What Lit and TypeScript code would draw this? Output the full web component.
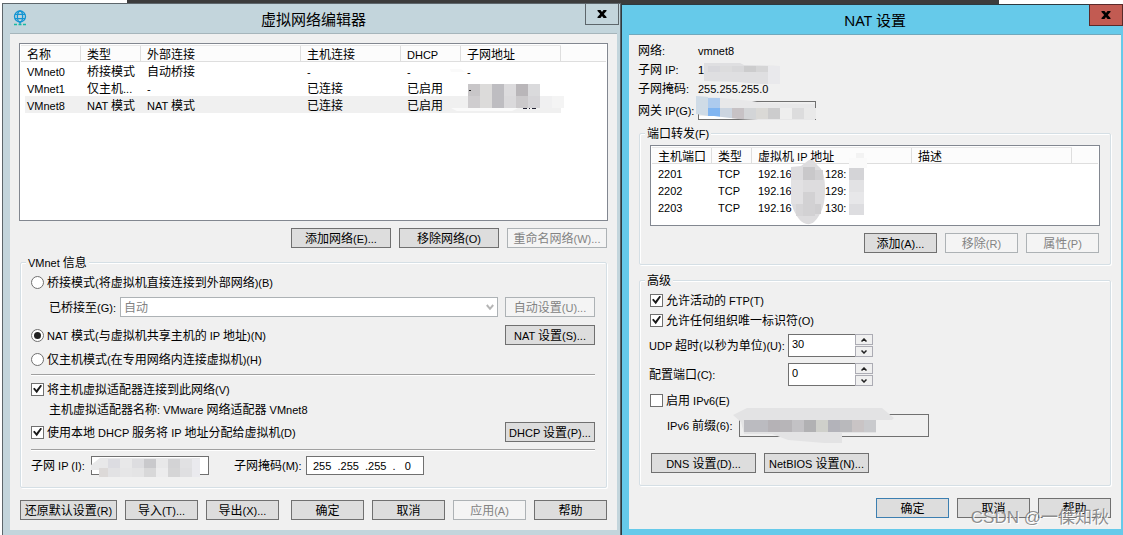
import { LitElement, html, svg, css, nothing } from "lit";
import { customElement, property } from "lit/decorators.js";
import { classMap } from "lit/directives/class-map.js";

type Cell = [number, number, number, number, string];

/** Splits a caption so that Latin runs use the smaller UI face beside the Chinese one. */
const t = (text: string) => {
  const runs = text.match(/[\u3000-\u9fff]+|[^\u3000-\u9fff]+/g) ?? [];
  return html`<span class="t">${runs.map((r) => (/[\u3000-\u9fff]/.test(r) ? r : html`<span class="l">${r}</span>`))}</span>`;
};

const cells = (list: Cell[]) =>
  list.map(([x, y, w, h, c]) => svg`<rect x=${x} y=${y} width=${w} height=${h} fill=${c}></rect>`);

const strip = (x: number, y: number, w: number, h: number, colors: string[]): Cell[] =>
  colors.map((c, i) => [x + i * w, y, w, h, c]);

@customElement("dialog-window")
class DialogWindow extends LitElement {
  @property() heading = "";
  @property() tone: "idle" | "active" = "idle";

  static styles = css`
    :host { display: block; min-width: 0; }
    .frame {
      box-sizing: border-box; height: 100%; position: relative;
      border: 1px solid #5d666b; border-bottom: 0; background: #c3d5dc; padding: 0 3px 4px 7px;
    }
    .frame.active { background: #66caea; border-color: #2d3a40; border-right: 0; padding: 0 2px 6px 7px; }
    .bar {
      height: 29px; display: flex; align-items: center; justify-content: center;
      border-bottom: 1px solid #a6b5bb; font: 15px/20px "Noto Sans", "Noto Sans CJK SC", sans-serif; color: #000;
    }
    .active .bar { border-color: #71a9bd; }
    .bar h1 { font: inherit; margin: 0; }
    .icon { position: absolute; left: 10px; top: 6px; }
    .close {
      position: absolute; right: 1px; top: -1px; width: 34px; height: 22px; padding: 0;
      border: 1px solid #5d666b; background: transparent; display: grid; place-items: center;
    }
    .active .close { right: 0; background: #c25b52; border-color: #5a2a2a; }
    .client { position: relative; background: #f0f0f0; }
  `;

  render() {
    const active = this.tone === "active";
    return html`
      <section class=${classMap({ frame: true, active })}>
        <header class="bar">
          ${active ? nothing : html`
            <svg class="icon" width="14" height="16" viewBox="0 0 14 16" fill="none" stroke="#1395d3" stroke-width="1.3" aria-hidden="true">
              <circle cx="7" cy="6.5" r="5.5"></circle>
              <ellipse cx="7" cy="6.5" rx="2.6" ry="5.5"></ellipse>
              <path d="M2 4.3h10M2 8.7h10M7 12v2"></path>
              <path d="M1 14.5h3M5.5 14.5h3M10 14.5h3" stroke="#18b9a4"></path>
            </svg>`}
          <h1>${this.heading}</h1>
          <button class="close" aria-label="关闭">
            <svg width="10" height="8" viewBox="0 0 10 8" aria-hidden="true">
              <path d="M.5 0h3L5 2l1.500-2h3v1L6.800 4l2.700 3v1h-3L5 6 3.500 8h-3V7l2.700-3L.5 1z" fill="#000"></path>
            </svg>
          </button>
        </header>
        <div class="client"><slot></slot></div>
      </section>`;
  }
}

@customElement("app-root")
class AppRoot extends LitElement {
  static styles = css`
    :host {
      display: block; position: relative; min-height: 100vh; box-sizing: border-box; padding: 3px 0 0 2px;
      background: linear-gradient(90deg, #fff 11.3%, #3c3c3c 11.3%, #3c3c3c 89%, #fff 89%) 0 0 / 100% 4px no-repeat #fff;
      color: #000; font: 12px/16px "Noto Sans CJK SC", sans-serif;
    }
    .desk { display: grid; grid-template-columns: 619fr 502fr; min-height: calc(100vh - 3px); }
    .right { margin-top: 1px; }
    .t { white-space: pre; }
    .l { font: 11px/16px "Liberation Sans", sans-serif; }

    .left-body { padding: 9px 9px 10px; }
    .right-body { padding: 6px 10px 11px; }

    .list { border: 1px solid #828790; background: #fff; padding: 1px; overflow: hidden; box-sizing: border-box; }
    .networks { min-height: 178px; }
    .ports { min-height: 81px; margin-top: 4px; }
    table { width: 100%; border-collapse: separate; border-spacing: 0; table-layout: fixed; }
    th, td { box-sizing: border-box; height: 17px; padding: 0 0 0 6px; text-align: left; font-weight: 400; white-space: nowrap; overflow: hidden; line-height: 14px; }
    th { background: #fcfcfc; border-bottom: 1px solid #dedede; border-top: 1px solid #e8e8e8; box-shadow: inset -1px 0 #dedede; }
    th:last-child { box-shadow: none; border-top-color: #fcfcfc; }
    th .l, td .l { line-height: 12px; }
    .chosen td:not(:last-child) { background: #f0f0f0; }
    .chosen td:first-child { background: linear-gradient(90deg, #fff 4px, #f0f0f0 4px); }
    .w40 { width: 40px; } .w60 { width: 60px; } .w100 { width: 100px; } .w160 { width: 160px; }
    .addr { display: grid; grid-template-columns: 67px auto; justify-content: start; }

    .btn {
      box-sizing: border-box; height: 20px; min-width: 73px; padding: 0; border: 1px solid #707070; background: #ddd;
      color: #000; font: inherit; display: inline-flex; align-items: center; justify-content: center; white-space: nowrap;
    }
    .btn:disabled { background: #f4f4f4; border-color: #adb2b5; color: #838383; }
    .btn.default { border-color: #3c7fb1; }
    .b90 { width: 90px; } .b97 { width: 97px; } .b100 { width: 100px; } .b105 { width: 105px; }
    .actions { display: flex; justify-content: flex-end; gap: 8px; margin: 7px 1px 0 0; }
    .footer { display: flex; gap: 8px; margin: 12px 1px 0; }
    .footer .push { margin-left: auto; }
    .right-body .footer { margin-right: 0; }

    fieldset { margin: 6px 1px 0; padding: 0; min-width: 0; border: 1px solid #d5dfe5; border-radius: 2px; box-shadow: inset 1px 1px #fff, 1px 1px #fff; }
    legend { margin-left: 5px; padding: 0 2px; height: 16px; background: #f0f0f0; }
    .group { padding: 0 11px 12px 10px; }
    .right-body fieldset { margin: 5px 0 0; }
    .right-body fieldset + fieldset { margin-top: 7px; }
    .right-body .group { padding: 0 10px 11px; }
    .right-body .advanced { padding-bottom: 12px; }

    .row { display: flex; align-items: center; min-height: 20px; }
    .row.end { justify-content: space-between; }
    .m2 { margin-top: 2px; } .m3 { margin-top: 3px; } .m4 { margin-top: 4px; } .m5 { margin-top: 5px; }
    .m6 { margin-top: 6px; } .m8 { margin-top: 8px; } .m16 { margin-top: 16px; }
    .indent { padding-left: 18px; }
    .choice { display: inline-flex; align-items: center; gap: 3px; }
    .choice input { appearance: none; margin: 0; width: 13px; height: 13px; box-sizing: border-box; border: 1px solid #707070; background: #fff; position: relative; flex: none; }
    .choice input[type="radio"] { border-radius: 50%; }
    .choice input[type="radio"]:checked::after { content: ""; position: absolute; inset: 2px; border-radius: 50%; background: #222; }
    .choice input[type="checkbox"]:checked::after {
      content: ""; position: absolute; inset: 1px; background: #1a1a1a;
      clip-path: polygon(0 48%, 18% 36%, 38% 62%, 84% 2%, 100% 14%, 42% 98%);
    }
    .rule { border: 0; height: 1px; background: #a0a0a0; margin: 5px 0 0; box-shadow: 0 1px #fff; }
    .rule.far { margin-top: 7px; }

    .combo { position: relative; flex: 1; margin: 0 7px 0 4px; display: flex; }
    .combo select { appearance: none; flex: 1; height: 20px; padding: 0 3px; border: 1px solid #adb2b5; border-radius: 0; background: #fff; color: #838383; font: inherit; opacity: 1; box-sizing: border-box; }
    .combo svg { position: absolute; right: 4px; top: 7px; }

    .text { box-sizing: border-box; height: 19px; width: 118px; border: 1px solid #707070; border-radius: 0; background: #fff; padding: 0 6px; margin: 0; font: 11px/16px "Liberation Sans", sans-serif; color: #000; }
    .ip-row { min-height: 19px; }
    .ip-row label { width: 60px; }
    .ip-row .mask { width: 72px; margin-left: 25px; }
    .facts { margin: 0; padding-left: 9px; margin-left: -10px; display: grid; grid-template-columns: 60px auto; grid-auto-rows: 19px; align-items: center; }
    .facts dt, .facts dd { margin: 0; }
    .gateway { min-height: 19px; margin: 3px 0 0 -1px; }
    .gateway label { width: 60px; }
    .gateway .text { background: #f0f0f0; }

    .numeric { min-height: 23px; }
    .numeric label { width: 139px; margin-left: -1px; white-space: nowrap; }
    .spin { display: flex; width: 85px; height: 23px; }
    .spin input { flex: 1; min-width: 0; box-sizing: border-box; border: 1px solid #707070; border-right: 0; border-radius: 0; padding: 0 3px 3px; background: #fff; font: 11px/16px "Liberation Sans", sans-serif; }
    .steps { display: grid; grid-template-rows: 1fr 1fr; width: 18px; background: #f0f0f0; gap: 1px; }
    .steps button { border: 1px solid #acacb4; background: #f0f0f0; padding: 0; display: grid; place-items: center; min-height: 0; }
    .prefix { min-height: 23px; padding-left: 17px; }
    .prefix label { width: 72px; }
    .prefix .text { width: 190px; height: 23px; background: #f0f0f0; }
    .pair { display: flex; gap: 8px; padding-left: 1px; }

    .redact { position: absolute; left: 0; top: 0; pointer-events: none; }
    .mark { position: absolute; right: 14px; bottom: 5px; font-family: "Liberation Sans", "Noto Sans CJK SC", sans-serif; font-size: 17px; line-height: 24px; color: rgba(115, 115, 115, 0.8); text-shadow: 1px 1px #fff; pointer-events: none; white-space: nowrap; }
  `;

  private btn(text: string, cls = "", disabled = false) {
    return html`<button class="btn ${cls}" ?disabled=${disabled}>${t(text)}</button>`;
  }

  private choice(kind: "radio" | "checkbox", text: string, checked = false) {
    return html`<label class="choice"><input type=${kind} name=${kind === "radio" ? "mode" : text} ?checked=${checked} />${t(text)}</label>`;
  }

  private spin(id: string, label: string, value: string, gap: string) {
    return html`
      <div class="row numeric ${gap}">
        <label for=${id}>${t(label)}</label>
        <div class="spin">
          <input id=${id} inputmode="numeric" .value=${value} />
          <div class="steps">
            <button aria-label="增加"><svg width="6" height="4" viewBox="0 0 6 4"><path d="M.5 3.500 3 1l2.500 2.500" fill="none" stroke="#222" stroke-width="1.500"></path></svg></button>
            <button aria-label="减少"><svg width="6" height="4" viewBox="0 0 6 4"><path d="M.5.5 3 3 5.500.5" fill="none" stroke="#222" stroke-width="1.500"></path></svg></button>
          </div>
        </div>
      </div>`;
  }

  private networks() {
    const head: [string, string][] = [["名称", "w60"], ["类型", "w60"], ["外部连接", "w160"], ["主机连接", "w100"], ["DHCP", "w60"], ["子网地址", "w100"], ["", ""]];
    const rows = [
      ["VMnet0", "桥接模式", "自动桥接", "-", "-", "-", ""],
      ["VMnet1", "仅主机...", "-", "已连接", "已启用", "", ""],
      ["VMnet8", "NAT 模式", "NAT 模式", "已连接", "已启用", "", ""],
    ];
    return html`
      <div class="list networks"><table>
        <thead><tr>${head.map(([h, w]) => html`<th class=${w}>${t(h)}</th>`)}</tr></thead>
        <tbody>${rows.map((r, i) => html`<tr class=${i === 2 ? "chosen" : ""}>${r.map((c) => html`<td>${t(c)}</td>`)}</tr>`)}</tbody>
      </table></div>`;
  }

  private ports() {
    const head: [string, string][] = [["主机端口", "w60"], ["类型", "w40"], ["虚拟机 IP 地址", "w160"], ["描述", "w160"], ["", ""]];
    const rows = [["2201", "128:"], ["2202", "129:"], ["2203", "130:"]];
    return html`
      <div class="list ports"><table>
        <thead><tr>${head.map(([h, w]) => html`<th class=${w}>${t(h)}</th>`)}</tr></thead>
        <tbody>${rows.map(([p, a]) => html`<tr>
          <td>${t(p)}</td><td>${t("TCP")}</td>
          <td><div class="addr">${t("192.16")}${t(a)}</div></td><td></td><td></td></tr>`)}</tbody>
      </table></div>`;
  }

  private leftRedaction() {
    return html`<svg class="redact" width="607" height="497" viewBox="10 34 607 497" aria-hidden="true">
      <path d="M450 69h11l4 3h-14zM451 108h67l-6 3h-55z" fill="#fafafa"></path>
      ${cells([
        ...strip(468, 84, 12, 12, ["#c8c6c8", "#dcdbda", "#bebdc1", "#dcdbdd", "#b9b6b9", "#dadadc"]),
        ...strip(468, 96, 12, 12, ["#cfcdcf", "#dcdbda", "#bebdc1", "#dad9db", "#cbc9cb", "#d6d5d8"]),
        ...strip(540, 96, 12, 12, ["#f0f0f1", "#f4f4f4"]),
        [469, 90, 2, 1, "#222"], [523, 108, 4, 1, "#223"], [529, 108, 1, 1, "#223"], [532, 108, 4, 1, "#223"],
      ])}
      <path d="M91 465l9-7h100v19h-101v-7h-8z" fill="#e8e8e9"></path>
      ${cells([
        ...strip(108, 459, 12, 9, ["#dcdce1", "#e8e8e9", "#dddde0", "#c9c9cc", "#e8e8e9", "#d3d3d5", "#e1e1e3"]),
        ...strip(108, 468, 12, 9, ["#e2e2e4", "#e6e6e7", "#e4e4e5", "#d8d8d9", "#ececed", "#d5d5d6", "#dfdfe1"]),
        [99, 468, 9, 9, "#dcd9d8"], [192, 459, 8, 18, "#eaeaee"],
      ])}
    </svg>`;
  }

  private rightRedaction() {
    return html`<svg class="redact" width="492" height="494" viewBox="629 35 492 494" aria-hidden="true">
      <path d="M704 63h36l4 2 36 1v18h-20l-22-2-34-1z" fill="#dfdfe1"></path>
      ${cells([
        ...strip(708, 66, 12, 6, ["#d8d8dc", "#dcdcdd", "#d8d8da", "#cccccd", "#d5d5d6", "#dadadb"]),
        [768, 66, 12, 18, "#e9e9ec"],
      ])}
      <path d="M696 96l16 1 40 4 10 2 53 1v16H758l-40-2-22-5z" fill="#e8e8e9"></path>
      <path d="M696 96l12 1v19l-12-2z" fill="#cfdbe6"></path>
      ${cells([
        [708, 98, 12, 10, "#adcbee"], [708, 108, 12, 9, "#80b5f1"], [720, 108, 12, 10, "#ccd5e0"],
        ...strip(732, 108, 12, 11, ["#c7c2c5", "#d3d5d7", "#dad9d6", "#cccccd", "#eeeeee", "#dcdcdd", "#e9e9e9"]),
      ])}
      <path d="M699 116h15l24 3h-39z" fill="#fff"></path>
      <path d="M791 167l10-1 8-6h4l5 6c6 4 7 14 7 24 0 14-3 24-11 32-5 4-11 2-15-3-5-7-8-13-8-23z" fill="#dddcde"></path>
      ${cells([
        [803, 167, 12, 13, "#c9c8ca"], [815, 170, 8, 10, "#d1d0d2"], [791, 180, 12, 24, "#e2e1e3"],
        [803, 192, 12, 24, "#d2d1d3"], [815, 204, 6, 10, "#cfced0"], [796, 204, 7, 12, "#d6d5d7"],
        [849, 158, 18, 10, "#fafafa"], [856, 153, 8, 5, "#f3f3f3"],
        [849, 168, 15, 12, "#d4d4d7"], [849, 180, 15, 12, "#e2e2e4"], [849, 192, 15, 12, "#e7e7e9"], [849, 204, 15, 11, "#dddde0"],
      ])}
      <path d="M733 415l14-7h135l12 10-2 2h-16v13h-34v10h-18l-36-3-16-6h-28l-3-12z" fill="#e3e3e4"></path>
      ${cells([
        [744, 420, 24, 12, "#bbbbc0"], [768, 420, 12, 12, "#b5b2b6"], [780, 420, 12, 12, "#b7b5b8"], [792, 420, 12, 12, "#c3c2c5"],
        ...strip(804, 420, 12, 12, ["#b1b1b3", "#cfd0cb", "#b3b3ba", "#b9b9bc", "#c9c4c5", "#c9cacd"]),
      ])}
    </svg>`;
  }

  render() {
    return html`
      <main class="desk">
        <dialog-window heading="虚拟网络编辑器">
          <div class="left-body">
            ${this.networks()}
            <div class="actions">
              ${this.btn("添加网络(E)...", "b100")}${this.btn("移除网络(O)", "b100")}${this.btn("重命名网络(W)...", "b100", true)}
            </div>
            <fieldset>
              <legend>${t("VMnet 信息")}</legend>
              <div class="group">
                <div class="row m2">${this.choice("radio", "桥接模式(将虚拟机直接连接到外部网络)(B)")}</div>
                <div class="row m5 indent">
                  <label for="bridge">${t("已桥接至(G):")}</label>
                  <div class="combo">
                    <select id="bridge" disabled><option>自动</option></select>
                    <svg width="8" height="7" viewBox="0 0 8 7" aria-hidden="true"><path d="M.8 1 4 4.800 7.200 1" fill="none" stroke="#b5b5b5" stroke-width="2"></path></svg>
                  </div>
                  ${this.btn("自动设置(U)...", "b90", true)}
                </div>
                <div class="row end m8">${this.choice("radio", "NAT 模式(与虚拟机共享主机的 IP 地址)(N)", true)}${this.btn("NAT 设置(S)...", "b90")}</div>
                <div class="row m4">${this.choice("radio", "仅主机模式(在专用网络内连接虚拟机)(H)")}</div>
                <hr class="rule" />
                <div class="row m4">${this.choice("checkbox", "将主机虚拟适配器连接到此网络(V)", true)}</div>
                <div class="row indent">${t("主机虚拟适配器名称: VMware 网络适配器 VMnet8")}</div>
                <div class="row end m3">${this.choice("checkbox", "使用本地 DHCP 服务将 IP 地址分配给虚拟机(D)", true)}${this.btn("DHCP 设置(P)...", "b90")}</div>
                <hr class="rule far" />
                <div class="row ip-row m6">
                  <label for="subnet">${t("子网 IP (I):")}</label><input id="subnet" class="text" />
                  <label class="mask" for="mask">${t("子网掩码(M):")}</label><input id="mask" class="text" .value=${"255  .255  .255  .   0"} />
                </div>
              </div>
            </fieldset>
            <div class="footer">
              ${this.btn("还原默认设置(R)", "b97")}${this.btn("导入(T)...")}${this.btn("导出(X)...")}
              ${this.btn("确定", "push")}${this.btn("取消")}${this.btn("应用(A)", "", true)}${this.btn("帮助")}
            </div>
          </div>
          ${this.leftRedaction()}
        </dialog-window>

        <dialog-window class="right" heading="NAT 设置" tone="active">
          <div class="right-body">
            <dl class="facts">
              <dt>${t("网络:")}</dt><dd>${t("vmnet8")}</dd>
              <dt>${t("子网 IP:")}</dt><dd>${t("1")}</dd>
              <dt>${t("子网掩码:")}</dt><dd>${t("255.255.255.0")}</dd>
            </dl>
            <div class="row gateway">
              <label for="gateway">${t("网关 IP(G):")}</label><input id="gateway" class="text" />
            </div>
            <fieldset>
              <legend>${t("端口转发(F)")}</legend>
              <div class="group">
                ${this.ports()}
                <div class="actions">${this.btn("添加(A)...")}${this.btn("移除(R)", "", true)}${this.btn("属性(P)", "", true)}</div>
              </div>
            </fieldset>
            <fieldset>
              <legend>${t("高级")}</legend>
              <div class="group advanced">
                <div class="row m2">${this.choice("checkbox", "允许活动的 FTP(T)", true)}</div>
                <div class="row">${this.choice("checkbox", "允许任何组织唯一标识符(O)", true)}</div>
                ${this.spin("udp", "UDP 超时(以秒为单位)(U):", "30", "m4")}
                ${this.spin("port", "配置端口(C):", "0", "m6")}
                <div class="row m4">${this.choice("checkbox", "启用 IPv6(E)")}</div>
                <div class="row prefix m4"><label for="prefix">${t("IPv6 前缀(6):")}</label><input id="prefix" class="text" /></div>
                <div class="pair m16">${this.btn("DNS 设置(D)...", "b105")}${this.btn("NetBIOS 设置(N)...", "b105")}</div>
              </div>
            </fieldset>
            <div class="footer">${this.btn("确定", "push default")}${this.btn("取消")}${this.btn("帮助")}</div>
          </div>
          ${this.rightRedaction()}
        </dialog-window>
      </main>
      <div class="mark">CSDN @一僷知秋</div>`;
  }
}
